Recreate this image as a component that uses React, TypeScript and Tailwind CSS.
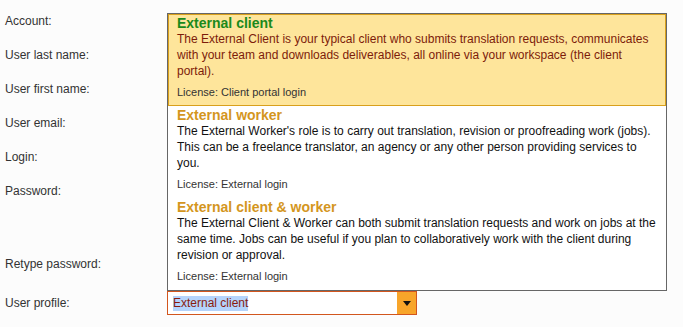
import { useState } from "react";

interface Profile {
    id: string;
    title: string;
    description: string;
    license: string;
}

const PROFILES: Profile[] = [
    {
        id: "client",
        title: "External client",
        description:
            "The External Client is your typical client who submits translation requests, communicates with your team and downloads deliverables, all online via your workspace (the client portal).",
        license: "License: Client portal login",
    },
    {
        id: "worker",
        title: "External worker",
        description:
            "The External Worker's role is to carry out translation, revision or proofreading work (jobs). This can be a freelance translator, an agency or any other person providing services to you.",
        license: "License: External login",
    },
    {
        id: "both",
        title: "External client & worker",
        description:
            "The External Client & Worker can both submit translation requests and work on jobs at the same time. Jobs can be useful if you plan to collaboratively work with the client during revision or approval.",
        license: "License: External login",
    },
];

function Row({ label, className }: { label: string; className: string }) {
    return (
        <div className={`flex ${className}`}>
            <div className="w-[162px] h-[34px] flex items-center text-[12px] text-[#333]">
                {label}
            </div>
        </div>
    );
}

export default function App() {
    const [selected, setSelected] = useState("client");
    const current = PROFILES.find((p) => p.id === selected)!;

    return (
        <div className="min-h-[327px] w-[683px] bg-[#fcfcfc] pl-[5px] pt-[4px] font-['Liberation_Sans',Arial,sans-serif]">
            <Row label="Account:" className="h-[34px]" />
            <Row label="User last name:" className="h-[34px]" />
            <Row label="User first name:" className="h-[34px]" />
            <Row label="User email:" className="h-[34px]" />
            <Row label="Login:" className="h-[34px]" />
            <Row label="Password:" className="h-[73px]" />
            <Row label="Retype password:" className="h-[34px]" />

            <div className="flex items-center pt-[10px]">
                <div className="w-[162px] text-[12px] text-[#333]">User profile:</div>

                <div className="relative">
                    {/* open dropdown list */}
                    <div className="absolute bottom-full left-0 w-[500px] border border-[#666] bg-white">
                        {PROFILES.map((p) => {
                            const active = p.id === selected;
                            return (
                                <div
                                    key={p.id}
                                    onClick={() => setSelected(p.id)}
                                    className={`border pl-[8px] pr-[8px] pb-[6px] cursor-pointer ${active
                                            ? "bg-[#fee59b] border-[#d9a01c]"
                                            : "bg-white border-transparent"
                                        }`}
                                >
                                    <div
                                        className={`text-[14px] leading-[16px] font-bold ${active ? "text-[#1b8a1b]" : "text-[#d4961e]"
                                            }`}
                                    >
                                        {p.title}
                                    </div>
                                    <div
                                        className={`text-[12px] leading-[16px] ${active ? "text-[#7d1c0a]" : "text-[#111]"
                                            }`}
                                    >
                                        {p.description}
                                    </div>
                                    <div className="mt-[6px] text-[11px] leading-[14px] text-[#333]">
                                        {p.license}
                                    </div>
                                </div>
                            );
                        })}
                    </div>

                    {/* select box */}
                    <div className="flex h-[24px] w-[250px] border border-[#d2561e] bg-white">
                        <div className="flex flex-1 items-center pl-[5px]">
                            <span className="bg-[#b4d4fc] text-[12px] leading-[15px] text-[#8a1c0c]">
                                {current.title}
                            </span>
                        </div>
                        <div className="flex w-[19px] items-center justify-center bg-[#f8a52a]">
                            <svg width="8" height="5" viewBox="0 0 8 5">
                                <path d="M0 0 L8 0 L4 5 Z" fill="#111" />
                            </svg>
                        </div>
                    </div>
                </div>
            </div>
        </div>
    );
}
